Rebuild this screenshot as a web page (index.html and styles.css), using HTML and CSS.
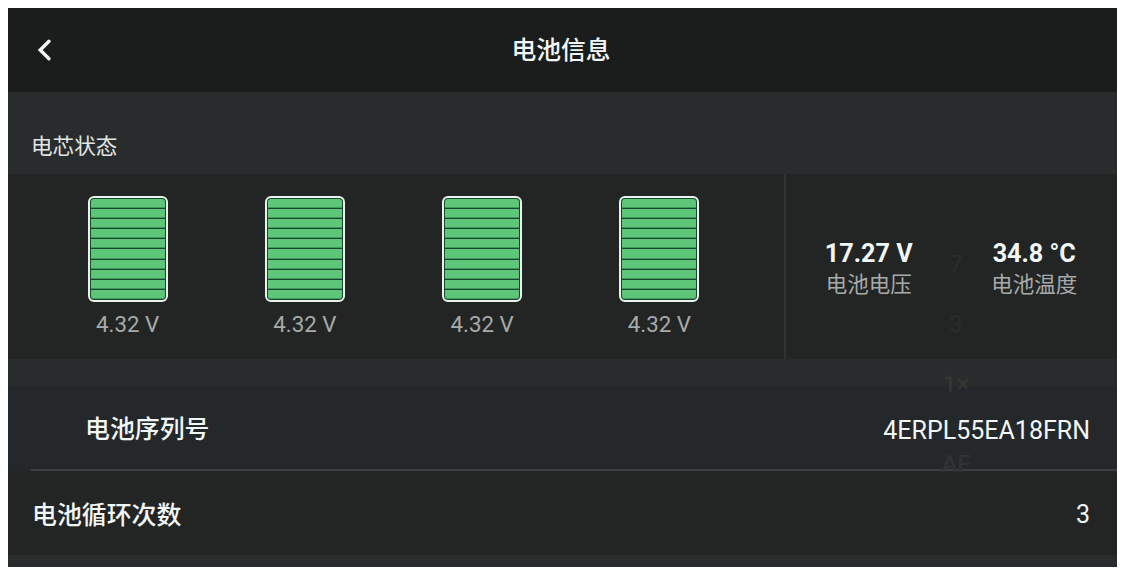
FILE: index.html
```
<!DOCTYPE html>
<html lang="zh-CN">
<head>
  <meta charset="UTF-8">
  <meta name="viewport" content="width=device-width, initial-scale=1.0">
  <title>电池信息</title>
  <link rel="stylesheet" href="styles.css">
</head>
<body>
  <div class="screen">
    <header class="header">
      <svg class="back" width="16" height="24" viewBox="0 0 16 24">
        <path d="M13 3.2 L4.2 12 L13 20.8" />
      </svg>
      <h1>电池信息</h1>
    </header>

    <h2 class="section-title">电芯状态</h2>

    <div class="status">
      <div class="cells">
        <div class="cell">
          <div class="battery"><i></i><i></i><i></i><i></i><i></i><i></i><i></i><i></i><i></i><i></i></div>
          <span>4.32 V</span>
        </div>
        <div class="cell">
          <div class="battery"><i></i><i></i><i></i><i></i><i></i><i></i><i></i><i></i><i></i><i></i></div>
          <span>4.32 V</span>
        </div>
        <div class="cell">
          <div class="battery"><i></i><i></i><i></i><i></i><i></i><i></i><i></i><i></i><i></i><i></i></div>
          <span>4.32 V</span>
        </div>
        <div class="cell">
          <div class="battery"><i></i><i></i><i></i><i></i><i></i><i></i><i></i><i></i><i></i><i></i></div>
          <span>4.32 V</span>
        </div>
      </div>
      <div class="totals">
        <div class="total">
          <strong>17.27 V</strong>
          <span>电池电压</span>
        </div>
        <div class="total">
          <strong>34.8 °C</strong>
          <span>电池温度</span>
        </div>
      </div>
    </div>

    <div class="row serial">
      <span class="label">电池序列号</span>
      <span class="value">4ERPL55EA18FRN</span>
    </div>
    <div class="row">
      <span class="label">电池循环次数</span>
      <span class="value">3</span>
    </div>

    <!-- camera zoom controls showing faintly through the panel -->
    <div class="zoom-levels">
      <span>7</span>
      <span>3</span>
      <span class="active">1×</span>
      <span class="focus">AF</span>
    </div>
  </div>
</body>
</html>
```

FILE: styles.css
```
* {
  box-sizing: border-box;
}
body {
  margin: 0;
  padding: 8px 4px 8px 8px;
  background-color: #fff;
  font-family: Roboto, "Noto Sans CJK SC", sans-serif;
  color: #f1f6f6;
}
h1, h2 {
  margin: 0;
}
.screen {
  position: relative;
  height: 559px;
  overflow: hidden;
  background-color: #292c2c;
}

.header {
  display: grid;
  grid-template-columns: 60px 1fr 60px;
  align-items: center;
  height: 84px;
  background-color: #1b1d1c;
}
.header h1 {
  font-size: 24.8px;
  font-weight: 500;
  line-height: 36px;
  text-align: center;
  padding: 2px 3px 0 0;
}
.back {
  margin-left: 28px;
  fill: none;
  stroke: #f1f6f6;
  stroke-width: 3.4;
  stroke-linecap: round;
}

.section-title {
  height: 82px;
  padding: 39px 0 0 23px;
  font-size: 21.6px;
  font-weight: 400;
  line-height: 32px;
  color: #e2e6e6;
}

.status {
  display: flex;
  height: 185px;
  background-color: #232524;
}
.cells {
  display: grid;
  grid-template-columns: repeat(4, 1fr);
  width: 778px;
  padding: 22px 36px 0 31px;
  border-right: 2px solid #303332;
}
.cell {
  display: flex;
  flex-direction: column;
  align-items: center;
  font-size: 22.3px;
  line-height: 26px;
  color: #a7aaaa;
}
.cell span {
  margin-top: 9px;
}
.battery {
  display: flex;
  flex-direction: column;
  gap: 1px;
  width: 80px;
  height: 106px;
  padding: 1px;
  border: 2px solid #e9f3ec;
  border-radius: 6px;
  background-color: #17482f;
}
.battery i {
  flex: 1;
  background-color: #5dc679;
  box-shadow: inset 0 -1px #3f9a5c;
}
.battery i:first-child {
  border-radius: 3px 3px 0 0;
}
.battery i:last-child {
  border-radius: 0 0 3px 3px;
}

.totals {
  display: grid;
  grid-template-columns: 1fr 1fr;
  flex: 1;
  padding-top: 65px;
}
.total {
  display: flex;
  flex-direction: column;
  align-items: center;
}
.total strong {
  font-size: 25.2px;
  font-weight: 700;
  line-height: 30px;
}
.total span {
  font-size: 21.5px;
  line-height: 32px;
  color: #a7aaaa;
}

.row {
  display: flex;
  justify-content: space-between;
  align-items: center;
  height: 84px;
  padding: 0 27px 0 24px;
  font-size: 25px;
  background-color: #232524;
}
.row .label {
  padding-bottom: 1px;
  font-size: 24.9px;
  font-weight: 500;
}
.row .value {
  padding-top: 3px;
}
.serial {
  position: relative;
  height: 85px;
  margin-top: 27px;
  padding-left: 77px;
  background-color: #24282a;
}
.serial .label {
  padding-bottom: 3px;
}
.serial::after {
  content: "";
  position: absolute;
  left: 23px;
  right: 0;
  bottom: 0;
  height: 2px;
  background-color: #3b3f3f;
}

.zoom-levels {
  position: absolute;
  top: 242px;
  left: 922px;
  width: 52px;
  display: flex;
  flex-direction: column;
  align-items: center;
  font-size: 24px;
  line-height: 28px;
  color: #2a2d2c;
}
.zoom-levels span {
  margin-bottom: 32px;
}
.zoom-levels .active {
  font-weight: 500;
  color: #343630;
}
.zoom-levels .focus {
  margin: 20px 0 0;
  font-weight: 500;
  color: #2f3334;
}
```
